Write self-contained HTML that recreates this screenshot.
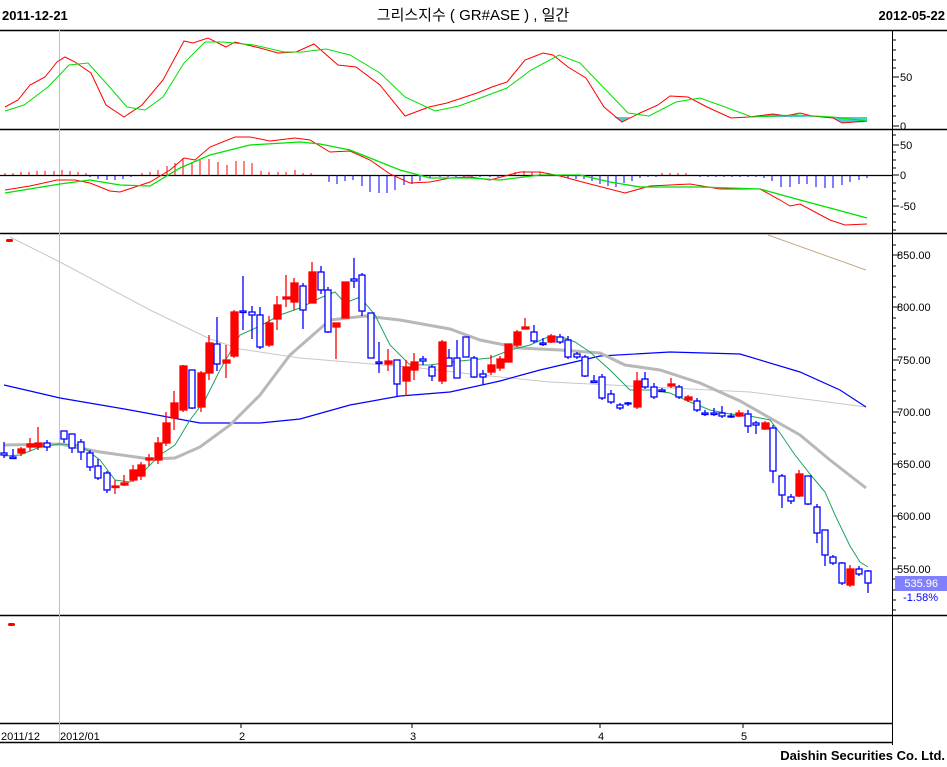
<!DOCTYPE html>
<html><head><meta charset="utf-8"><style>
html,body{margin:0;padding:0;background:#fff;}
svg{display:block;}
text{font-family:"Liberation Sans","Noto Sans CJK KR",sans-serif;}
</style></head><body>
<svg width="947" height="767" viewBox="0 0 947 767" xmlns="http://www.w3.org/2000/svg">
<rect width="947" height="767" fill="#fff"/>
<!-- header -->
<text x="2" y="20" font-size="13" font-weight="bold">2011-12-21</text>
<text x="473" y="20" font-size="15" text-anchor="middle">그리스지수 ( GR#ASE ) , 일간</text>
<text x="945" y="20" font-size="13" font-weight="bold" text-anchor="end">2012-05-22</text>
<!-- frame lines -->
<g stroke="#000" stroke-width="1.5">
<line x1="0" y1="30.5" x2="947" y2="30.5"/>
<line x1="0" y1="129.5" x2="947" y2="129.5"/>
<line x1="0" y1="233.5" x2="947" y2="233.5"/>
<line x1="0" y1="615.5" x2="947" y2="615.5"/>
<line x1="0" y1="723.5" x2="892" y2="723.5"/>
<line x1="0" y1="742.5" x2="892" y2="742.5"/>
</g>
<line x1="892.5" y1="30" x2="892.5" y2="745" stroke="#000" stroke-width="1"/>
<line x1="59.5" y1="30" x2="59.5" y2="742" stroke="#c0c0c0" stroke-width="1"/>
<!-- axis ticks -->
<g stroke="#000" stroke-width="1">
<path d="M892 40h4M892 50h4M892 60h4M892 68h4M892 77h7M892 86h4M892 96h4M892 106h4M892 116h4M892 126h7"/>
<path d="M892 135h4M892 145h7M892 152h4M892 160h4M892 168h4M892 175h7M892 183h4M892 191h4M892 199h4M892 206h7M892 214h4M892 222h4M892 230h4"/>
<path d="M892 245h4M892 255h7M892 266h4M892 276h4M892 287h4M892 297h4M892 307h7M892 318h4M892 328h4M892 339h4M892 349h4M892 360h7M892 370h4M892 380h4M892 391h4M892 401h4M892 412h7M892 422h4M892 433h4M892 443h4M892 454h4M892 464h7M892 474h4M892 485h4M892 495h4M892 506h4M892 516h7M892 527h4M892 537h4M892 548h4M892 558h4M892 569h7M892 579h4M892 590h4M892 600h4M892 610h4"/>
<line x1="0" y1="175.5" x2="892" y2="175.5" stroke-width="1.2"/>
<path d="M241 723v5M412 723v5M600 723v5M743 723v5"/>
</g>
<g font-size="11" fill="#000">
<text x="900" y="81">50</text><text x="900" y="130">0</text>
<text x="900" y="149">50</text><text x="900" y="179">0</text><text x="900" y="210">-50</text>
<text x="897" y="259">850.00</text><text x="897" y="311">800.00</text><text x="897" y="364">750.00</text>
<text x="897" y="416">700.00</text><text x="897" y="468">650.00</text><text x="897" y="520">600.00</text>
<text x="897" y="573">550.00</text>
</g>
<rect x="895" y="576" width="52" height="15" fill="#8080ff"/>
<text x="938" y="587" font-size="11" fill="#fff" text-anchor="end">535.96</text>
<text x="938" y="601" font-size="11" fill="#0000ff" text-anchor="end">-1.58%</text>
<!-- stochastic panel -->
<path d="M614 117 L622 122 L630 117 Z M727 117 L867 117 L867 122 L842 123 L833 118 L773 114 L752 117 Z" fill="#40d0d0"/>
<polyline fill="none" stroke="#ff0000" stroke-width="1" points="5,107 18,100 30,85 45,77 57,62 65,57 75,62 91,73 106,105 124,117 142,105 163,80 184,41 193,43 208,38 226,47 235,42 260,48 278,53 296,52 314,44 338,65 356,67 380,85 405,116 429,107 447,103 477,93 492,87 507,82 525,60 543,53 553,55 568,67 586,78 604,107 622,122 640,113 658,105 670,96 688,97 707,107 731,118 749,117 773,114 785,116 800,113 812,116 833,118 842,123 867,121"/>
<polyline fill="none" stroke="#00e000" stroke-width="1" points="5,111 24,105 48,87 69,65 88,63 106,83 127,107 145,110 163,97 184,63 205,42 223,42 254,45 284,52 302,52 326,49 350,55 380,73 405,97 435,111 459,106 483,97 507,88 531,70 559,55 580,63 604,88 628,113 649,116 676,102 700,98 725,107 752,117 797,115 833,117 867,121"/>
<!-- MACD histogram -->
<g stroke="#ff0000" stroke-width="1">
<path d="M5 175v-2M13 175v-2M21 175v-3M29 175v-3M37 175v-4M45 175v-4M54 175v-4M62 175v-5M70 175v-4M78 175v-3M86 175v-2M142 175v-2M150 175v-3M158 175v-5M167 175v-9M175 175v-12M183 175v-17M192 175v-13M200 175v-15M209 175v-16M218 175v-13M227 175v-10M236 175v-14M244 175v-14M252 175v-12M261 175v-4M269 175v-3M278 175v-3M286 175v-3M295 175v-5M303 175v-2M311 175v-2M515 175v-3M524 175v-4M532 175v-3M540 175v-3M548 175v-2M662 175v-2M670 175v-2M678 175v-2M686 175v-2"/>
</g>
<g stroke="#0000ff" stroke-width="1">
<path d="M90 175v2M98 175v4M107 175v5M115 175v5M123 175v4M131 175v2M329 175v7M337 175v9M345 175v6M353 175v5M362 175v11M370 175v17M379 175v18M387 175v18M395 175v15M404 175v10M412 175v9M420 175v6M430 175v3M440 175v2M448 175v2M456 175v2M464 175v2M472 175v2M480 175v2M490 175v2M498 175v2M568 175v3M576 175v4M584 175v4M592 175v6M600 175v9M608 175v11M616 175v12M624 175v8M632 175v6M640 175v3M648 175v2M656 175v2M700 175v2M708 175v2M716 175v2M724 175v2M732 175v2M740 175v2M748 175v2M756 175v2M764 175v3M772 175v6M781 175v12M790 175v12M799 175v9M807 175v9M816 175v12M825 175v13M833 175v13M842 175v10M850 175v7M859 175v5M867 175v3"/>
</g>
<polyline fill="none" stroke="#ff0000" stroke-width="1" points="5,190 30,186 57,180 75,180 90,183 110,191 120,192 150,182 170,170 184,158 195,160 210,147 235,137 250,137 270,141 295,138 310,140 330,152 350,151 370,160 390,174 410,183 430,182 450,178 470,177 490,180 520,172 540,172 560,176 590,184 625,193 650,186 690,184 720,189 760,189 780,200 790,206 800,204 830,220 845,225 867,224"/>
<polyline fill="none" stroke="#00e000" stroke-width="1.3" points="5,193 60,184 90,180 120,185 150,186 180,168 210,155 250,145 300,142 320,144 350,150 370,158 400,170 430,178 470,178 500,180 540,175 580,175 610,182 640,187 700,187 760,189 800,200 830,208 867,218"/>
<!-- main chart MAs -->
<polyline fill="none" stroke="#c8c8c8" stroke-width="1" points="10,237 60,262 150,310 210,339 240,349 300,358 360,363 420,368 470,374 550,382 650,387 750,392 866,407"/>
<polyline fill="none" stroke="#c8a888" stroke-width="1" points="768,235 866,270"/>
<polyline fill="none" stroke="#0000ff" stroke-width="1.2" points="4,385 30,391 60,398 130,410 200,423 260,423 300,419 350,405 400,396 450,392 500,381 540,370 600,356 670,352 740,354 800,372 840,390 866,407"/>
<polyline fill="none" stroke="#b8b8b8" stroke-width="3" points="4,445 60,444 100,452 150,459 175,458 200,447 230,425 260,395 290,355 330,320 365,316 400,320 450,329 480,340 520,348 560,350 600,353 625,365 660,370 700,383 740,401 770,418 800,435 830,460 866,488"/>
<polyline fill="none" stroke="#20a060" stroke-width="1" points="4,456 20,455 40,447 60,444 80,445 100,460 115,480 130,482 145,470 160,455 175,445 190,420 205,400 220,370 240,335 260,326 280,315 300,308 320,298 335,292 345,303 360,297 375,315 390,345 410,365 430,365 450,362 470,360 490,358 510,350 530,345 550,336 565,338 575,342 590,352 610,370 630,390 650,390 670,393 690,402 710,410 730,414 750,416 770,420 780,433 795,455 810,474 825,492 835,515 850,546 860,562 868,567"/>
<!-- candles -->
<g stroke="#0000ff" stroke-width="1.3" fill="#fff">
<path fill="none" d="M4 442v16M13 449v10M47 440v11M64 431v12M72 434v19M81 439v21M90 450v21M98 459v21M107 471v22M192 370v39M217 317v54M243 276v54M252 306v33M260 307v42M303 283v46M321 266v28M328 287v46M354 258v30M362 273v43M371 313v45M379 342v31M397 360v36M423 356v9M432 365v16M449 349v17M457 340v38M466 337v20M474 356v22M483 370v15M534 325v18M543 338v8M560 334v10M568 336v23M577 352v7M585 355v22M594 375v8M602 374v26M611 390v14M620 403v7M628 402v4M645 372v17M654 383v16M662 388v4M679 385v14M697 398v14M705 410v6M714 408v8M722 406v12M731 413v5M748 410v23M756 421v13M773 425v58M782 474v34M791 494v10M808 476v29M817 504v39M825 530v36M833 555v10M842 562v23M859 566v10M868 570v23"/>
<rect x="1" y="453" width="6" height="2"/><rect x="10" y="457" width="6" height="1.5"/>
<rect x="44" y="443" width="6" height="4"/><rect x="61" y="431" width="6" height="8"/>
<rect x="69" y="434" width="6" height="14"/><rect x="78" y="442" width="6" height="10"/>
<rect x="87" y="453" width="6" height="14"/><rect x="95" y="466" width="6" height="12"/>
<rect x="104" y="473" width="6" height="17"/><rect x="189" y="370" width="6" height="38"/>
<rect x="214" y="344" width="6" height="20"/><rect x="240" y="311" width="6" height="1.5"/>
<rect x="249" y="312" width="6" height="3"/><rect x="257" y="315" width="6" height="32"/>
<rect x="300" y="286" width="6" height="24"/><rect x="318" y="272" width="6" height="18"/>
<rect x="325" y="290" width="6" height="42"/><rect x="351" y="279" width="6" height="2"/>
<rect x="359" y="275" width="6" height="36"/><rect x="368" y="313" width="6" height="45"/>
<rect x="376" y="362" width="6" height="1.5"/><rect x="394" y="360" width="6" height="24"/>
<rect x="420" y="359" width="6" height="2"/><rect x="429" y="367" width="6" height="9"/>
<rect x="446" y="358" width="6" height="8"/><rect x="454" y="358" width="6" height="20"/>
<rect x="463" y="337" width="6" height="20"/><rect x="471" y="358" width="6" height="19"/>
<rect x="480" y="374" width="6" height="3"/><rect x="531" y="332" width="6" height="9"/>
<rect x="540" y="343" width="6" height="1.5"/><rect x="557" y="337" width="6" height="5"/>
<rect x="565" y="340" width="6" height="17"/><rect x="574" y="354" width="6" height="3"/>
<rect x="582" y="357" width="6" height="19"/><rect x="591" y="381" width="6" height="1.5"/>
<rect x="599" y="377" width="6" height="21"/><rect x="608" y="394" width="6" height="8"/>
<rect x="617" y="405" width="6" height="3"/><rect x="625" y="403" width="6" height="1"/>
<rect x="642" y="379" width="6" height="8"/><rect x="651" y="387" width="6" height="10"/>
<rect x="659" y="390" width="6" height="1.5"/><rect x="676" y="387" width="6" height="10"/>
<rect x="694" y="401" width="6" height="9"/><rect x="702" y="413" width="6" height="1.5"/>
<rect x="711" y="413" width="6" height="1.5"/><rect x="719" y="413" width="6" height="3"/>
<rect x="728" y="416" width="6" height="1"/><rect x="745" y="414" width="6" height="12"/>
<rect x="753" y="423" width="6" height="2"/><rect x="770" y="428" width="6" height="43"/>
<rect x="779" y="476" width="6" height="19"/><rect x="788" y="497" width="6" height="4"/>
<rect x="805" y="476" width="6" height="28"/><rect x="814" y="507" width="6" height="26"/>
<rect x="822" y="530" width="6" height="25"/><rect x="830" y="557" width="6" height="6"/>
<rect x="839" y="563" width="6" height="20"/><rect x="856" y="569" width="6" height="5"/>
<rect x="865" y="571" width="6" height="12"/>
</g>
<g stroke="#ff0000" stroke-width="1.3" fill="#ff0000">
<path fill="none" d="M21 447v9M30 438v13M38 427v23M115 480v14M124 475v11M133 465v17M141 462v18M149 454v12M158 437v27M166 412v34M174 391v39M183 365v47M201 371v41M209 335v45M226 345v33M234 310v48M269 316v31M277 296v34M286 275v32M294 278v32M312 262v41M336 323v36M345 282v36M388 349v22M406 360v36M414 353v27M442 340v44M491 355v20M500 356v15M508 344v18M517 330v17M525 318v11M551 334v9M637 372v37M671 378v10M688 395v7M739 410v7M765 421v9M799 470v27M850 565v22"/>
<rect x="18" y="449" width="7" height="4"/><rect x="27" y="444" width="7" height="3"/>
<rect x="35" y="443" width="7" height="4"/><rect x="112" y="486" width="7" height="1.5"/>
<rect x="121" y="483" width="7" height="2"/><rect x="130" y="470" width="7" height="10"/>
<rect x="138" y="465" width="7" height="11"/><rect x="146" y="458" width="7" height="2"/>
<rect x="155" y="443" width="7" height="17"/><rect x="163" y="423" width="7" height="20"/>
<rect x="171" y="403" width="7" height="15"/><rect x="180" y="366" width="7" height="44"/>
<rect x="198" y="373" width="7" height="34"/><rect x="206" y="343" width="7" height="30"/>
<rect x="223" y="360" width="7" height="3"/><rect x="231" y="312" width="7" height="44"/>
<rect x="266" y="323" width="7" height="22"/><rect x="274" y="305" width="7" height="14"/>
<rect x="283" y="297" width="7" height="2"/><rect x="291" y="283" width="7" height="19"/>
<rect x="309" y="272" width="7" height="31"/><rect x="333" y="323" width="7" height="4"/>
<rect x="342" y="282" width="7" height="36"/><rect x="385" y="361" width="7" height="3"/>
<rect x="403" y="367" width="7" height="14"/><rect x="411" y="362" width="7" height="8"/>
<rect x="439" y="342" width="7" height="39"/><rect x="488" y="365" width="7" height="7"/>
<rect x="497" y="359" width="7" height="9"/><rect x="505" y="344" width="7" height="18"/>
<rect x="514" y="332" width="7" height="13"/><rect x="522" y="327" width="7" height="2"/>
<rect x="548" y="336" width="7" height="6"/><rect x="634" y="381" width="7" height="26"/>
<rect x="668" y="384" width="7" height="2"/><rect x="685" y="397" width="7" height="3"/>
<rect x="736" y="413" width="7" height="3"/><rect x="762" y="423" width="7" height="6"/>
<rect x="796" y="474" width="7" height="22"/><rect x="847" y="569" width="7" height="16"/>
</g>
<rect x="6" y="239" width="7" height="3" rx="1.5" fill="#ff0000"/>
<rect x="8" y="623" width="7" height="3" rx="1.5" fill="#ff0000"/>
<!-- x axis labels -->
<g font-size="11" fill="#000">
<text x="1" y="740">2011/12</text><text x="60" y="740">2012/01</text>
<text x="239" y="740">2</text><text x="410" y="740">3</text><text x="598" y="740">4</text><text x="741" y="740">5</text>
</g>
<text x="945" y="760" font-size="13" font-weight="bold" text-anchor="end">Daishin Securities Co. Ltd.</text>
</svg>
</body></html>
